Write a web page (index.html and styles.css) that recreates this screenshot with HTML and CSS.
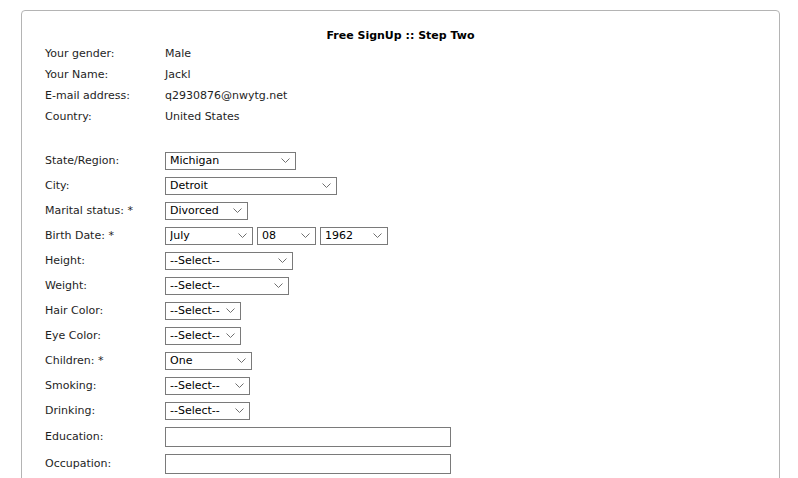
FILE: index.html
```html
<!DOCTYPE html>
<html lang="en">
<head>
    <meta charset="UTF-8">
    <title>Free SignUp :: Step Two</title>
    <link rel="stylesheet" href="styles.css">
</head>
<body>

<div class="panel">
    <h1 class="title">Free SignUp :: Step Two</h1>

    <div class="info">
        <div class="label">Your gender:</div><div class="value">Male</div>
        <div class="label">Your Name:</div><div class="value">Jackl</div>
        <div class="label">E-mail address:</div><div class="value">q2930876@nwytg.net</div>
        <div class="label">Country:</div><div class="value">United States</div>
    </div>

    <form class="form">
        <div class="label">State/Region:</div>
        <div class="field"><select class="w-state"><option>Michigan</option></select></div>

        <div class="label">City:</div>
        <div class="field"><select class="w-city"><option>Detroit</option></select></div>

        <div class="label">Marital status: *</div>
        <div class="field"><select class="w-marital"><option>Divorced</option></select></div>

        <div class="label">Birth Date: *</div>
        <div class="field">
            <select class="w-month"><option>July</option></select>
            <select class="w-day"><option>08</option></select>
            <select class="w-year"><option>1962</option></select>
        </div>

        <div class="label">Height:</div>
        <div class="field"><select class="w-height"><option>--Select--</option></select></div>

        <div class="label">Weight:</div>
        <div class="field"><select class="w-weight"><option>--Select--</option></select></div>

        <div class="label">Hair Color:</div>
        <div class="field"><select class="w-small"><option>--Select--</option></select></div>

        <div class="label">Eye Color:</div>
        <div class="field"><select class="w-small"><option>--Select--</option></select></div>

        <div class="label">Children: *</div>
        <div class="field"><select class="w-children"><option>One</option></select></div>

        <div class="label">Smoking:</div>
        <div class="field"><select class="w-habit"><option>--Select--</option></select></div>

        <div class="label">Drinking:</div>
        <div class="field"><select class="w-habit"><option>--Select--</option></select></div>

        <div class="label">Education:</div>
        <div class="field"><input type="text"></div>

        <div class="label">Occupation:</div>
        <div class="field"><input type="text"></div>
    </form>
</div>

</body>
</html>
```

FILE: styles.css
```css
html, body {
    margin: 0;
    padding: 0;
    background: #fff;
}
html {
    height: 478px;
    overflow: hidden;
}
body {
    font-family: Tahoma, "DejaVu Sans", sans-serif;
    font-size: 11px;
    color: #1e1e1e;
}
.panel {
    margin: 10px 18px 0 21px;
    height: 500px;
    border: 1px solid #b4b4b4;
    border-radius: 4px;
    padding: 18px 0 0 23px;
}
.title {
    margin: 0 0 0 -23px;
    font-size: 11px;
    line-height: 14px;
    font-weight: bold;
    text-align: center;
    color: #000;
}
.info {
    display: grid;
    grid-template-columns: 120px 1fr;
    grid-auto-rows: 21px;
    align-items: center;
}
.form {
    display: grid;
    grid-template-columns: 120px 1fr;
    grid-template-rows: repeat(11, 25px) 27px 27px;
    align-items: center;
    margin-top: 21px;
}
.field {
    display: flex;
    gap: 4px;
}
select {
    appearance: none;
    -webkit-appearance: none;
    height: 18px;
    margin: 0;
    padding: 0 0 0 4px;
    border: 1px solid #7a7a7a;
    border-radius: 0;
    font-family: inherit;
    font-size: 11px;
    color: #000;
    background: #fff url("data:image/svg+xml,%3Csvg xmlns='http://www.w3.org/2000/svg' width='9' height='5'%3E%3Cpath d='M0.5 0.5 L4.5 4.5 L8.5 0.5' fill='none' stroke='%23707070' stroke-width='1'/%3E%3C/svg%3E") no-repeat right 5px center;
}
input[type="text"] {
    box-sizing: border-box;
    width: 286px;
    height: 20px;
    margin: 0;
    padding: 0 3px;
    border: 1px solid #7a7a7a;
    border-radius: 0;
    font-family: inherit;
    font-size: 11px;
}
.w-state { width: 131px; }
.w-city { width: 172px; }
.w-marital { width: 83px; }
.w-month { width: 88px; }
.w-day { width: 59px; }
.w-year { width: 68px; }
.w-height { width: 128px; }
.w-weight { width: 124px; }
.w-small { width: 76px; }
.w-children { width: 87px; }
.w-habit { width: 85px; }
```
